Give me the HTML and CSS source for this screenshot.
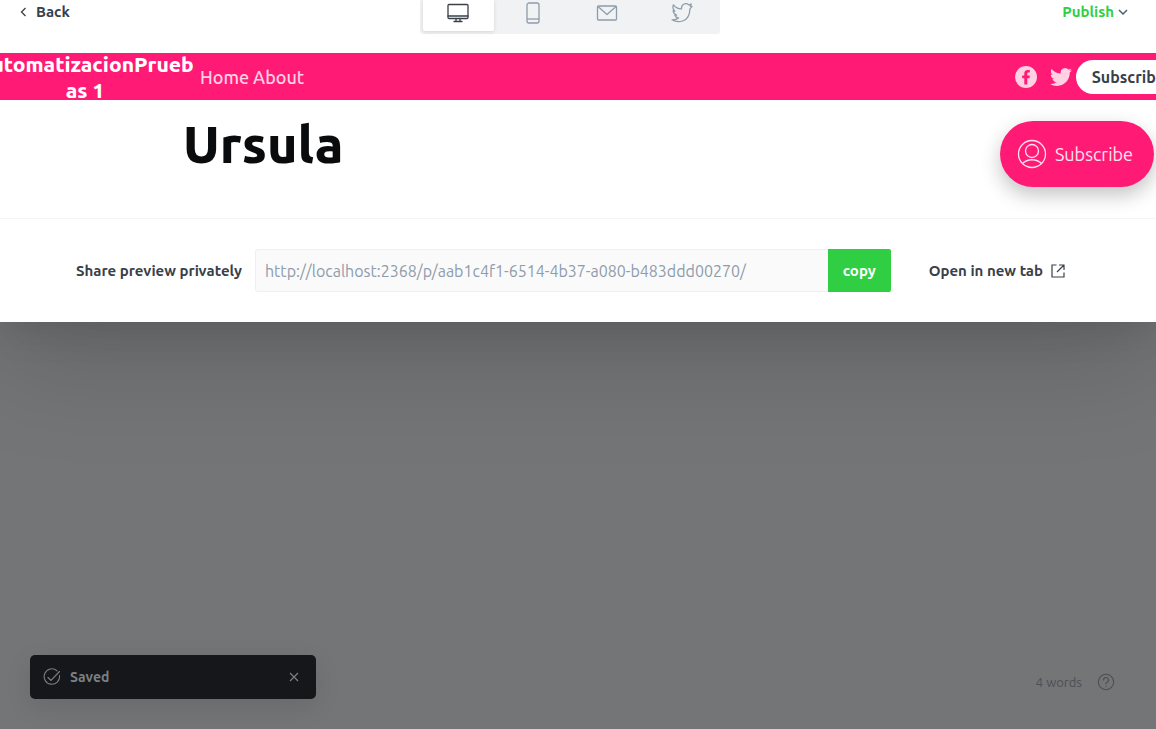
FILE: index.html
```html
<!DOCTYPE html>
<html lang="en">
<head>
<meta charset="utf-8">
<title>Preview</title>
<link rel="stylesheet" href="styles.css">
</head>
<body>
<main class="modal">
  <header class="toolbar">
    <button class="back" type="button">
      <svg width="7" height="10" viewBox="0 0 7 10"><path d="M5.5 1 1.5 5l4 4" fill="none" stroke="currentColor" stroke-width="1.3"/></svg>
      Back
    </button>
    <div class="tabs">
      <button class="tab tab-active" type="button" aria-label="Desktop">
        <svg width="22" height="20" viewBox="0 0 22 20" fill="none" stroke="currentColor" stroke-width="1.3" stroke-linejoin="round" stroke-linecap="round"><rect x="1" y="1.5" width="20" height="14" rx="1"/><path d="M1 13h20M9 15.500v3M13 15.500v3M7 18.500h8"/></svg>
      </button>
      <button class="tab" type="button" aria-label="Mobile">
        <svg width="22" height="22" viewBox="0 0 22 22" fill="none" stroke="currentColor" stroke-width="1.3"><rect x="5" y="1" width="12" height="20" rx="2"/><path d="M5 17h12"/></svg>
      </button>
      <button class="tab" type="button" aria-label="Email">
        <svg width="22" height="18" viewBox="0 0 22 18" fill="none" stroke="currentColor" stroke-width="1.3" stroke-linejoin="round"><rect x="1.500" y="2" width="19" height="14" rx="1"/><path d="M2 2.500 11 10.500 20 2.500"/></svg>
      </button>
      <button class="tab" type="button" aria-label="Social">
        <svg width="22" height="20" viewBox="0 0 24 22" fill="none" stroke="currentColor" stroke-width="1.4" stroke-linejoin="round"><path d="M23 4l-2-.5 1.300-2.300-2.800.9a4.700 4.700 0 0 0-8 3.300v1C8 6.600 5 5 2.600 2c-1.200 2.700-.5 5.200 1.600 7L2.300 8.500c.2 2.500 1.500 4 3.700 4.900l-1.800.3c.7 1.700 2 2.600 4 2.800C6.400 18 4 18.600 1 18.500c6.500 3.700 19.500 3 19.700-12z"/></svg>
      </button>
    </div>
    <button class="publish" type="button">
      Publish
      <svg width="10" height="6" viewBox="0 0 10 6"><path d="M1 1l4 4 4-4" fill="none" stroke="#54606a" stroke-width="1.500"/></svg>
    </button>
  </header>

  <section class="site">
    <nav class="site-nav">
      <a class="site-title" href="#">AutomatizacionPrueb<br>as 1</a>
      <div class="site-links"><a href="#">Home</a><a href="#">About</a></div>
      <div class="social">
        <a href="#" aria-label="Facebook"><svg width="22" height="22" viewBox="0 0 22 22"><path fill="currentColor" fill-rule="evenodd" d="M11 0a11 11 0 1 0 0 22 11 11 0 0 0 0-22zM9.300 18.500v-6.300H7.200V9.400h2.100V7.600c0-2.400 1.200-3.700 3.500-3.700h2v2.600h-1.400c-.9 0-1.100.4-1.100 1.200v1.700h2.500l-.3 2.800h-2.200v6.300z"/></svg></a>
        <a href="#" aria-label="Twitter"><svg width="22" height="22" viewBox="0 0 24 24"><path fill="currentColor" d="M23.950 4.570a10 10 0 0 1-2.820.77 4.960 4.960 0 0 0 2.160-2.720c-.95.550-2 .95-3.130 1.180a4.920 4.920 0 0 0-8.380 4.480C7.690 8.090 4.070 6.130 1.640 3.160a4.820 4.820 0 0 0-.67 2.480c0 1.710.87 3.210 2.190 4.100a4.900 4.900 0 0 1-2.230-.62v.06a4.920 4.920 0 0 0 3.950 4.830 5 5 0 0 1-2.210.08 4.940 4.940 0 0 0 4.600 3.420A9.870 9.870 0 0 1 0 19.540a14 14 0 0 0 7.550 2.210c9.050 0 14-7.500 14-13.980l-.02-.64a9.900 9.900 0 0 0 2.420-2.560z"/></svg></a>
      </div>
      <a class="nav-subscribe" href="#">Subscribe</a>
    </nav>
    <div class="post">
      <h1 class="post-title">Ursula</h1>
      <button class="portal" type="button">
        <svg width="30" height="30" viewBox="0 0 30 30" fill="none" stroke="currentColor" stroke-width="1.300"><circle cx="15" cy="15" r="13.500"/><circle cx="15" cy="12" r="6.500"/><path d="M5.500 24.500c5-5 14-5 19 0"/></svg>
        Subscribe
      </button>
    </div>
  </section>

  <footer class="share">
    <label class="share-label" for="preview-url">Share preview privately</label>
    <div class="share-field">
      <input class="share-input" id="preview-url" type="text" readonly value="http://localhost:2368/p/aab1c4f1-6514-4b37-a080-b483ddd00270/">
      <button class="copy" type="button">copy</button>
    </div>
    <a class="open-tab" href="#">Open in new tab
      <svg width="14" height="14" viewBox="0 0 14 14" fill="none" stroke="currentColor" stroke-width="1.200"><path d="M5.500 1H1v12h12V8.500M8 1h5v5M13 1 6 8"/></svg>
    </a>
  </footer>
</main>

<div class="editor-footer">
  <div class="toast" role="status">
    <svg width="18" height="18" viewBox="0 0 18 18" fill="none" stroke="currentColor" stroke-width="1.100" stroke-linecap="round"><path d="M14 2.800A7.700 7.700 0 1 0 16.500 7.500M5 9.500l3 3L16.500 3.500"/></svg>
    <span class="toast-text">Saved</span>
    <button class="toast-close" type="button" aria-label="Close">
      <svg width="10" height="10" viewBox="0 0 10 10"><path d="M1 1l8 8M9 1 1 9" stroke="currentColor" stroke-width="1.200"/></svg>
    </button>
  </div>
  <div class="status">
    <span>4 words</span>
    <svg width="18" height="18" viewBox="0 0 18 18" fill="none" stroke="currentColor" stroke-width="1.100" stroke-linecap="round"><circle cx="9" cy="9" r="7.700"/><path d="M6.500 7a2.500 2.500 0 1 1 3.600 2.200C9.300 9.600 9 10 9 11M9 13.200v.2"/></svg>
  </div>
</div>
</body>
</html>
```
FILE: styles.css
```css
* { box-sizing: border-box; }
body {
  margin: 0;
  min-height: 100vh;
  display: flex;
  flex-direction: column;
  overflow: hidden;
  background: #747577;
  color: #394047;
  font-family: Ubuntu, "Noto Sans", sans-serif;
  font-size: 15px;
  line-height: 20px;
}
button { font: inherit; color: inherit; border: 0; background: none; padding: 0; cursor: pointer; }
a { color: inherit; text-decoration: none; }
svg { display: block; flex: none; }

.modal { background: #fff; box-shadow: 0 3px 40px rgba(0, 0, 0, .12), 0 40px 100px rgba(0, 0, 0, .15); }

.toolbar {
  display: grid;
  grid-template-columns: 1fr 300px 1fr;
  align-items: start;
  height: 53px;
  padding: 0 28px 0 12px;
}
.back, .publish { display: flex; align-items: center; padding-top: 2px; font-weight: 600; }
.back { justify-self: start; gap: 9px; padding-left: 8px; }
.publish { justify-self: end; gap: 4px; color: #30cf43; }
.tabs { display: grid; grid-template-columns: repeat(4, 1fr); gap: 4px; padding: 0 3px 3px; background: #f0f2f4; border-radius: 0 0 3px 3px; }
.tab { display: flex; align-items: center; justify-content: center; height: 31px; padding-bottom: 6px; color: #8e9cac; border-radius: 0 0 2px 2px; }
.tab-active { background: #fff; color: #394047; box-shadow: 0 1px 4px rgba(0, 0, 0, .12); }

.site { overflow: hidden; border-bottom: 1px solid #f4f5f6; }
.site-nav { display: flex; align-items: center; height: 47px; background: #ff1a75; color: #ffd1e3; }
.site-title { flex: none; width: 220px; margin-left: -25px; color: #fff; font-size: 21px; font-weight: 800; line-height: 26px; text-align: center; white-space: nowrap; }
.site-links { display: flex; gap: 4px; margin-left: 5px; font-size: 18px; font-weight: 500; }
.social { display: flex; gap: 13px; margin-left: auto; }
.nav-subscribe { flex: none; margin: 0 -25px 0 4px; padding: 7px 16px; border-radius: 17px; background: #fff; color: #394047; font-size: 16px; font-weight: 600; }
.post { display: flex; justify-content: space-between; align-items: start; height: 118px; padding: 21px 2px 0 183px; }
.post-title { margin: 0; color: #0a0b0c; font-size: 52px; font-weight: 800; line-height: 46px; }
.portal { display: flex; align-items: center; gap: 8px; height: 66px; padding: 0 21px 0 17px; border-radius: 33px; background: #ff1a75; color: #ffe3ee; font-size: 18px; box-shadow: 0 8px 20px rgba(0, 0, 0, .24); }

.share { display: flex; align-items: center; padding: 30px 91px 30px 76px; }
.share-label { font-weight: 700; }
.share-field { flex: 1; display: flex; margin: 0 38px 0 13px; }
.share-input { flex: 1; min-width: 0; height: 43px; padding: 0 9px; border: 1px solid #eef0f2; border-right: 0; border-radius: 3px 0 0 3px; background: #fafafa; color: #8e9cac; font: inherit; font-size: 16px; }
.copy { padding: 0 15px; border-radius: 0 2px 2px 0; background: #30cf43; color: #fff; font-weight: 600; }
.open-tab { display: flex; align-items: center; gap: 8px; font-weight: 600; }

.editor-footer { margin-top: auto; display: flex; justify-content: space-between; align-items: center; padding: 0 41px 30px 30px; }
.toast { display: flex; align-items: center; gap: 9px; width: 286px; height: 44px; padding: 0 17px 0 13px; border-radius: 5px; background: #15171a; color: #7d7f82; box-shadow: 0 8px 26px rgba(0, 0, 0, .1); }
.toast-text { font-size: 14px; font-weight: 700; }
.toast-close { margin-left: auto; }
.status { display: flex; align-items: center; gap: 15px; padding-top: 9px; color: #4b4f56; font-size: 13px; }
```
